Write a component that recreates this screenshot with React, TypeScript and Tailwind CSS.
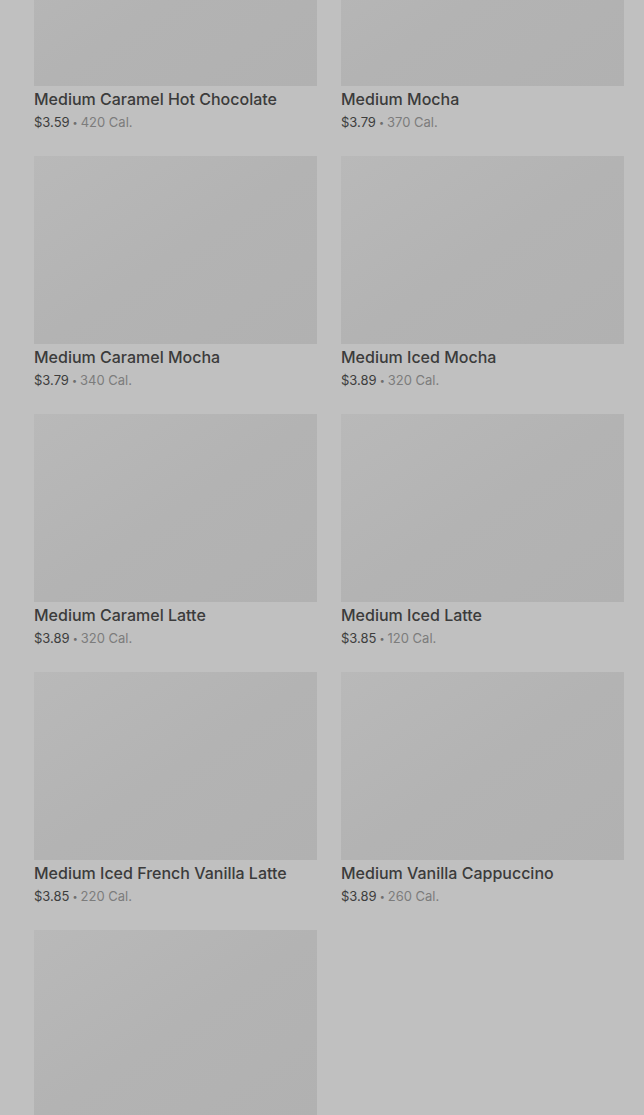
const items = [
  { name: 'Medium Caramel Hot Chocolate', price: '$3.59', cal: '420 Cal.' },
  { name: 'Medium Mocha', price: '$3.79', cal: '370 Cal.' },
  { name: 'Medium Caramel Mocha', price: '$3.79', cal: '340 Cal.' },
  { name: 'Medium Iced Mocha', price: '$3.89', cal: '320 Cal.' },
  { name: 'Medium Caramel Latte', price: '$3.89', cal: '320 Cal.' },
  { name: 'Medium Iced Latte', price: '$3.85', cal: '120 Cal.' },
  { name: 'Medium Iced French Vanilla Latte', price: '$3.85', cal: '220 Cal.' },
  { name: 'Medium Vanilla Cappuccino', price: '$3.89', cal: '260 Cal.' },
  { name: '', price: '', cal: '' },
]

function MenuCard({ name, price, cal }: { name: string; price: string; cal: string }) {
  return (
    <div className="flex flex-col">
      <div className="h-[188px] bg-[#b3b3b3] bg-gradient-to-br from-[#b9b9b9] via-[#b3b3b3] to-[#b1b1b1]" />
      {name && (
        <>
          <div className="mt-[3px] h-[20px] text-[16px] font-medium leading-[20px] text-[#3b3b3b]">{name}</div>
          <div className="mt-[4px] flex h-[18px] items-center text-[13px] leading-[18px]">
            <span className="text-[#3d3d3d]">{price}</span>
            <span className="mx-[3px] text-[9px] leading-none text-[#6e6e6e]">•</span>
            <span className="text-[#7c7c7c]">{cal}</span>
          </div>
        </>
      )}
    </div>
  )
}

export default function App() {
  return (
    <div className="h-[1115px] overflow-hidden bg-[#c0c0c0]" style={{ fontFamily: 'Inter, "Noto Sans", sans-serif' }}>
      <div className="-mt-[102px] grid grid-cols-2 gap-x-[24px] gap-y-[25px] pl-[34px] pr-[20px]">
        {items.map((it, i) => (
          <MenuCard key={i} {...it} />
        ))}
      </div>
    </div>
  )
}
